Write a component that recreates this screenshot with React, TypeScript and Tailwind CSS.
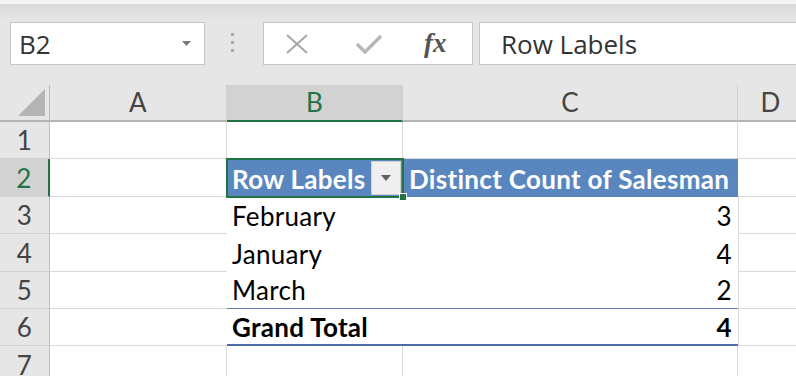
const cellFont = { fontFamily: "Lato, 'Liberation Sans', sans-serif" };

const HeaderCell = ({ label, className }: { label: string; className: string }) => (
  <div className={`flex items-end justify-center pb-[5px] text-[26px] leading-none text-[#444] border-r border-[#d0d0d0] border-b-2 border-b-[#b4b4b4] ${className}`}>
    {label}
  </div>
);

const RowHead = ({ n, selected }: { n: number; selected?: boolean }) => (
  <div
    className={
      selected
        ? "w-[50px] shrink-0 flex items-end justify-center pb-[5px] text-[26px] leading-none bg-[#d2d2d2] text-[#217346] border-r-2 border-r-[#217346] border-b border-b-[#d0d0d0]"
        : "w-[50px] shrink-0 flex items-end justify-center pb-[5px] text-[26px] leading-none text-[#444] border-r border-r-[#bcbcbc] border-b border-b-[#d0d0d0]"
    }
  >
    {n}
  </div>
);

const Blank = ({ className }: { className: string }) => (
  <div className={`shrink-0 bg-white border-b border-r border-[#dadada] ${className}`} />
);

const Dropdown = () => (
  <svg width="10" height="6" viewBox="0 0 10 6">
    <path d="M0 0h10L5 6z" fill="#606060" />
  </svg>
);

const App = () => {
  const body = [
    { n: 3, label: "February", value: "3", h: "h-[37px]" },
    { n: 4, label: "January", value: "4", h: "h-[38px]" },
    { n: 5, label: "March", value: "2", h: "h-[37px]" },
  ];

  return (
    <div className="w-[796px] h-[376px] overflow-hidden bg-[#e6e6e6] flex flex-col tracking-[0.3px]" style={cellFont}>
      {/* formula bar */}
      <div className="h-[4px] shrink-0 bg-[#f4f4f4]" />
      <div className="h-[81px] shrink-0 bg-gradient-to-b from-[#dadada] to-[#e6e6e6] to-[20%] pt-[18px] flex items-start tracking-normal">
        <div className="ml-[10px] w-[195px] h-[43px] bg-white border border-[#c6c6c6] flex items-center justify-between pl-[8px] pr-[13px]">
          <span className="text-[26px] text-[#333] leading-none" style={{ fontFamily: "'Open Sans', sans-serif" }}>
            B2
          </span>
          <svg width="9" height="5" viewBox="0 0 9 5">
            <path d="M0 0h9L4.5 5z" fill="#7a7a7a" />
          </svg>
        </div>
        <div className="ml-[26px] mt-[11px] flex flex-col gap-[5px]">
          <div className="w-[3px] h-[3px] bg-[#ababab]" />
          <div className="w-[3px] h-[3px] bg-[#ababab]" />
          <div className="w-[3px] h-[3px] bg-[#ababab]" />
        </div>
        <div className="ml-[29px] w-[210px] h-[43px] bg-white border border-[#c6c6c6] flex items-center">
          <svg className="ml-[21px]" width="24" height="20" viewBox="0 0 24 20">
            <path d="M2 1l20 18M22 1L2 19" stroke="#a6a6a6" strokeWidth="2" fill="none" />
          </svg>
          <svg className="ml-[47px]" width="26" height="20" viewBox="0 0 26 20">
            <path d="M1 10l8 8L25 2" stroke="#b8b8b8" strokeWidth="3.5" fill="none" />
          </svg>
          <span
            className="ml-[42px] text-[27px] italic font-bold leading-none text-[#555]"
            style={{ fontFamily: "'Liberation Serif', serif" }}
          >
            fx
          </span>
        </div>
        <div className="ml-[6px] flex-1 h-[43px] bg-white border border-r-0 border-[#c6c6c6] flex items-center pl-[21px]">
          <span className="text-[26px] text-[#333] leading-none" style={{ fontFamily: "'Open Sans', sans-serif" }}>
            Row Labels
          </span>
        </div>
      </div>

      {/* column headers */}
      <div className="flex h-[37px] shrink-0">
        <div className="w-[50px] shrink-0 border-r border-r-[#bcbcbc] border-b-2 border-b-[#b4b4b4] flex items-end justify-end pr-[4px] pb-[4px]">
          <svg width="27" height="27" viewBox="0 0 27 27">
            <path d="M27 0V27H0z" fill="#b4b4b4" />
          </svg>
        </div>
        <HeaderCell label="A" className="w-[177px] shrink-0" />
        <div className="w-[176px] shrink-0 flex items-end justify-center pb-[5px] text-[26px] leading-none bg-[#d2d2d2] text-[#217346] border-r border-[#d0d0d0] border-b-2 border-b-[#217346]">
          B
        </div>
        <HeaderCell label="C" className="w-[335px] shrink-0" />
        <HeaderCell label="D" className="w-[66px] shrink-0" />
      </div>

      {/* row 1 */}
      <div className="flex h-[37px] shrink-0">
        <RowHead n={1} />
        <Blank className="w-[177px]" />
        <Blank className="w-[176px]" />
        <Blank className="w-[335px]" />
        <Blank className="w-[66px]" />
      </div>

      {/* row 2: pivot header */}
      <div className="flex h-[38px] shrink-0">
        <RowHead n={2} selected />
        <Blank className="w-[177px] border-r-0" />
        <div className="relative w-[176px] shrink-0 bg-[#5a86bf] flex items-end pl-[5px] pb-[5px]">
          <span className="text-[26px] font-bold text-white leading-none">Row Labels</span>
          <div className="absolute right-[2px] top-[2px] w-[30px] h-[34px] bg-[#efefef] border border-[#cfcfcf] flex items-center justify-center">
            <Dropdown />
          </div>
          <div className="absolute -left-[1px] -top-[1px] -right-[1px] -bottom-[1px] border-2 border-[#217346] pointer-events-none" />
          <div className="absolute -right-[4px] -bottom-[4px] w-[8px] h-[8px] bg-[#217346] border border-white" />
        </div>
        <div className="w-[335px] shrink-0 bg-[#5a86bf] flex items-end pl-[6px] pb-[5px]">
          <span className="text-[26px] font-bold text-white leading-none whitespace-nowrap">Distinct Count of Salesman</span>
        </div>
        <Blank className="w-[66px]" />
      </div>

      {/* pivot body */}
      {body.map((r) => (
        <div key={r.n} className={`flex ${r.h} shrink-0`}>
          <RowHead n={r.n} />
          <Blank className="w-[177px] border-r-0" />
          <div
            className={`w-[511px] shrink-0 bg-white flex items-end justify-between pl-[5px] pr-[6px] pb-[5px] text-[26px] leading-none text-black ${
              r.n === 5 ? "border-b border-b-[#5f7fb2]" : ""
            }`}
          >
            <span>{r.label}</span>
            <span>{r.value}</span>
          </div>
          <Blank className="w-[66px] border-l border-l-[#dadada]" />
        </div>
      ))}

      {/* row 6: grand total */}
      <div className="flex h-[37px] shrink-0">
        <RowHead n={6} />
        <Blank className="w-[177px] border-r-0" />
        <div className="w-[511px] shrink-0 bg-white flex items-end justify-between pl-[5px] pr-[6px] pb-[4px] text-[26px] leading-none font-bold text-black border-b-2 border-b-[#4a6ba3]">
          <span>Grand Total</span>
          <span>4</span>
        </div>
        <Blank className="w-[66px] border-l border-l-[#dadada]" />
      </div>

      {/* row 7 */}
      <div className="flex h-[38px] shrink-0">
        <RowHead n={7} />
        <Blank className="w-[177px]" />
        <Blank className="w-[176px]" />
        <Blank className="w-[335px]" />
        <Blank className="w-[66px]" />
      </div>
    </div>
  );
};

export default App;
